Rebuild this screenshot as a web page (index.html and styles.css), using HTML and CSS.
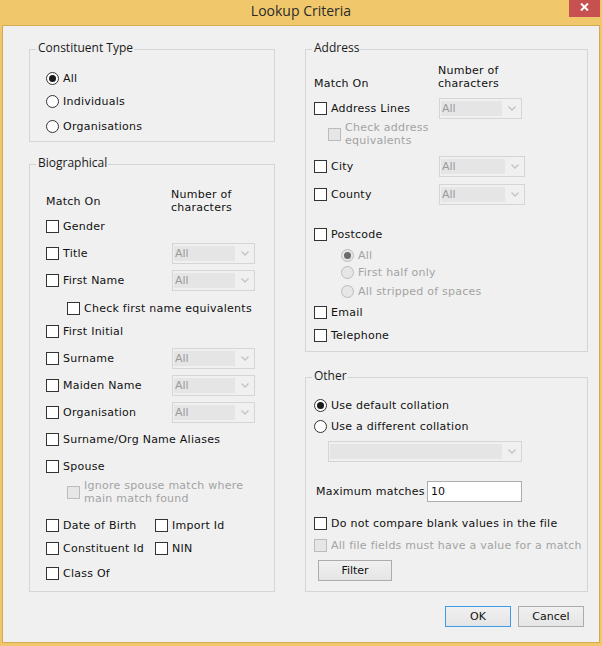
FILE: index.html
```html
<!DOCTYPE html>
<html lang="en">
<head>
<meta charset="utf-8">
<title>Lookup Criteria</title>
<link rel="stylesheet" href="styles.css">
</head>
<body>
<div class="window">
  <div class="titlebar">
    <span class="title">Lookup Criteria</span>
    <button class="close" aria-label="Close"><svg width="9" height="8" viewBox="0 0 9 8"><path d="M1 0.5 L8 7.5 M8 0.5 L1 7.5" stroke="#fff" stroke-width="2" fill="none"/></svg></button>
  </div>
  <div class="client">
    <div class="columns">
      <div class="col col-left">
        <fieldset class="group">
          <legend>Constituent Type</legend>
          <div class="gb gb-left gb-ct">
            <div class="row mt11"><span class="rb on"></span><span class="lbl">All</span></div>
            <div class="row mt3"><span class="rb"></span><span class="lbl">Individuals</span></div>
            <div class="row mt5"><span class="rb"></span><span class="lbl">Organisations</span></div>
          </div>
        </fieldset>
        <fieldset class="group bio">
          <legend>Biographical</legend>
          <div class="gb gb-left gb-bio">
            <div class="hdr hdr-bio"><span class="lead">Match On</span><span class="nchars">Number of<br>characters</span></div>
            <div class="row mt2"><span class="cb"></span><span class="lbl">Gender</span></div>
            <div class="row"><span class="lead"><span class="cb"></span><span class="lbl">Title</span></span><span class="combo w83"><span class="val">All</span><span class="arr"><svg width="8" height="5" viewBox="0 0 8 5"><path d="M0.5 0.5 L4 4 L7.5 0.5" fill="none" stroke="#c4c4c4" stroke-width="1.4"/></svg></span></span></div>
            <div class="row"><span class="lead"><span class="cb"></span><span class="lbl">First Name</span></span><span class="combo w83"><span class="val">All</span><span class="arr"><svg width="8" height="5" viewBox="0 0 8 5"><path d="M0.5 0.5 L4 4 L7.5 0.5" fill="none" stroke="#c4c4c4" stroke-width="1.4"/></svg></span></span></div>
            <div class="row mt8 ind21"><span class="cb"></span><span class="lbl">Check first name equivalents</span></div>
            <div class="row mt3"><span class="cb"></span><span class="lbl">First Initial</span></div>
            <div class="row"><span class="lead"><span class="cb"></span><span class="lbl">Surname</span></span><span class="combo w83"><span class="val">All</span><span class="arr"><svg width="8" height="5" viewBox="0 0 8 5"><path d="M0.5 0.5 L4 4 L7.5 0.5" fill="none" stroke="#c4c4c4" stroke-width="1.4"/></svg></span></span></div>
            <div class="row"><span class="lead"><span class="cb"></span><span class="lbl">Maiden Name</span></span><span class="combo w83"><span class="val">All</span><span class="arr"><svg width="8" height="5" viewBox="0 0 8 5"><path d="M0.5 0.5 L4 4 L7.5 0.5" fill="none" stroke="#c4c4c4" stroke-width="1.4"/></svg></span></span></div>
            <div class="row"><span class="lead"><span class="cb"></span><span class="lbl">Organisation</span></span><span class="combo w83"><span class="val">All</span><span class="arr"><svg width="8" height="5" viewBox="0 0 8 5"><path d="M0.5 0.5 L4 4 L7.5 0.5" fill="none" stroke="#c4c4c4" stroke-width="1.4"/></svg></span></span></div>
            <div class="row"><span class="cb"></span><span class="lbl">Surname/Org Name Aliases</span></div>
            <div class="row"><span class="cb"></span><span class="lbl">Spouse</span></div>
            <div class="row2 mt3 ind21 dis"><span class="cb dis"></span><span class="lbl">Ignore spouse match where<br>main match found</span></div>
            <div class="row mt10"><span class="half"><span class="cb"></span><span class="lbl">Date of Birth</span></span><span class="cb"></span><span class="lbl">Import Id</span></div>
            <div class="row mt3"><span class="half"><span class="cb"></span><span class="lbl">Constituent Id</span></span><span class="cb"></span><span class="lbl">NIN</span></div>
            <div class="row mt5"><span class="cb"></span><span class="lbl">Class Of</span></div>
          </div>
        </fieldset>
      </div>
      <div class="col col-right">
        <fieldset class="group">
          <legend>Address</legend>
          <div class="gb gb-right gb-addr">
            <div class="hdr hdr-addr"><span class="lead">Match On</span><span class="nchars">Number of<br>characters</span></div>
            <div class="row mt8"><span class="lead"><span class="cb"></span><span class="lbl">Address Lines</span></span><span class="combo w83"><span class="val">All</span><span class="arr"><svg width="8" height="5" viewBox="0 0 8 5"><path d="M0.5 0.5 L4 4 L7.5 0.5" fill="none" stroke="#c4c4c4" stroke-width="1.4"/></svg></span></span></div>
            <div class="row2 mt3 ind14 dis"><span class="cb dis"></span><span class="lbl">Check address<br>equivalents</span></div>
            <div class="row mt9"><span class="lead"><span class="cb"></span><span class="lbl">City</span></span><span class="combo w86"><span class="val">All</span><span class="arr"><svg width="8" height="5" viewBox="0 0 8 5"><path d="M0.5 0.5 L4 4 L7.5 0.5" fill="none" stroke="#c4c4c4" stroke-width="1.4"/></svg></span></span></div>
            <div class="row mt8"><span class="lead"><span class="cb"></span><span class="lbl">County</span></span><span class="combo w86"><span class="val">All</span><span class="arr"><svg width="8" height="5" viewBox="0 0 8 5"><path d="M0.5 0.5 L4 4 L7.5 0.5" fill="none" stroke="#c4c4c4" stroke-width="1.4"/></svg></span></span></div>
            <div class="row mt20"><span class="cb"></span><span class="lbl">Postcode</span></div>
            <div class="row sm mt3 ind27 dis"><span class="rb dis on"></span><span class="lbl">All</span></div>
            <div class="row sm mt1 ind27 dis"><span class="rb dis"></span><span class="lbl">First half only</span></div>
            <div class="row sm mt3 ind27 dis"><span class="rb dis"></span><span class="lbl">All stripped of spaces</span></div>
            <div class="row mt3"><span class="cb"></span><span class="lbl">Email</span></div>
            <div class="row mt3"><span class="cb"></span><span class="lbl">Telephone</span></div>
          </div>
        </fieldset>
        <fieldset class="group other">
          <legend>Other</legend>
          <div class="gb gb-right gb-other">
            <div class="row mt10"><span class="rb on"></span><span class="lbl">Use default collation</span></div>
            <div class="row mt1"><span class="rb"></span><span class="lbl">Use a different collation</span></div>
            <div class="row h21 mt5 ind14"><span class="combo w194"><span class="val"></span><span class="arr"><svg width="8" height="5" viewBox="0 0 8 5"><path d="M0.5 0.5 L4 4 L7.5 0.5" fill="none" stroke="#c4c4c4" stroke-width="1.4"/></svg></span></span></div>
            <div class="row h21 mt19 ind2"><span class="lbl maxlbl">Maximum matches</span><input class="tb" type="text" value="10" readonly></div>
            <div class="row mt11"><span class="cb"></span><span class="lbl">Do not compare blank values in the file</span></div>
            <div class="row mt2 dis"><span class="cb dis"></span><span class="lbl">All file fields must have a value for a match</span></div>
            <div class="row h21 mt5 ind4"><button class="btn filter">Filter</button></div>
          </div>
        </fieldset>
      </div>
    </div>
    <div class="actions">
      <button class="btn default">OK</button>
      <button class="btn">Cancel</button>
    </div>
  </div>
</div>
</body>
</html>
```
FILE: styles.css
```css
* { box-sizing: border-box; }
html, body { margin: 0; padding: 0; }
body {
  width: 602px;
  height: 646px;
  overflow: hidden;
  background: #f0c86b;
  font-family: "DejaVu Sans", Verdana, sans-serif;
  font-size: 11px;
  letter-spacing: 0.25px;
  color: #111;
}
.window {
  height: 646px;
  display: flex;
  flex-direction: column;
  background: #f0c86b;
}
.titlebar {
  height: 25px;
  display: grid;
  grid-template-columns: 1fr auto 1fr;
  align-items: start;
}
.title {
  grid-column: 2;
  font-family: "Open Sans", "Noto Sans", sans-serif;
  font-size: 14px;
  line-height: 21px;
  letter-spacing: 0;
  color: #2b2b2b;
}
.close {
  grid-column: 3;
  justify-self: end;
  margin-right: 2px;
  width: 31px;
  height: 17px;
  border: 0;
  padding: 0 0 3px;
  background: #c75050;
  display: flex;
  align-items: center;
  justify-content: center;
}
.client {
  flex: 1;
  margin: 0 2px 3px;
  border: 1px solid #d4aa52;
  background: #f0f0f0;
}
.columns {
  display: flex;
  gap: 30px;
  padding: 16px 11px 0 26px;
}
.col-left { width: 246px; }
.col-right { width: 283px; }

fieldset.group {
  margin: 0;
  padding: 0;
  min-width: 0;
  border: 1px solid #d5d5d5;
}
fieldset.bio { margin-top: 15px; }
fieldset.other { margin-top: 18px; }
legend {
  margin-left: 6px;
  padding: 0 1px 3px 2px;
  font-family: "Open Sans", "Noto Sans", sans-serif;
  font-size: 12px;
  line-height: 12px;
  letter-spacing: 0;
  color: #1a1a1a;
}
.gb-left { padding-left: 16px; }
.gb-right { padding-left: 8px; }
.gb-ct { padding-bottom: 5px; }
.gb-bio { padding-bottom: 8px; }
.gb-addr { padding-bottom: 6px; }
.gb-other { padding-bottom: 10px; }

.row {
  display: flex;
  align-items: center;
  height: 20px;
  margin-top: 7px;
  white-space: nowrap;
}
.row.sm { height: 16px; }
.row.h21 { height: 21px; }
.row2 {
  display: flex;
  align-items: center;
  height: 26px;
  line-height: 13px;
}
.mt1 { margin-top: 1px; }
.mt2 { margin-top: 2px; }
.mt3 { margin-top: 3px; }
.mt5 { margin-top: 5px; }
.mt8 { margin-top: 8px; }
.mt9 { margin-top: 9px; }
.mt10 { margin-top: 10px; }
.mt11 { margin-top: 11px; }
.mt19 { margin-top: 19px; }
.mt20 { margin-top: 20px; }
.ind2 { padding-left: 2px; }
.ind4 { padding-left: 4px; }
.ind14 { padding-left: 14px; }
.ind21 { padding-left: 21px; }
.ind27 { padding-left: 27px; }

.hdr {
  display: flex;
  height: 26px;
  line-height: 13px;
}
.hdr-bio { margin-top: 16px; align-items: center; }
.hdr-addr { margin-top: 7px; align-items: flex-end; }
.hdr .lead { width: 125px; }
.col-right .hdr .lead { width: 124px; }

.lead {
  display: flex;
  align-items: center;
  width: 126px;
}
.col-right .lead { width: 125px; }
.half {
  display: flex;
  align-items: center;
  width: 109px;
}
.lbl { margin-left: 4px; }
.dis .lbl { color: #a3a3a3; }
.maxlbl { margin-left: 0; width: 111px; }

.cb {
  flex: none;
  width: 13px;
  height: 13px;
  border: 1px solid #333;
  background: #fff;
}
.cb.dis {
  border-color: #bcbcbc;
  background: #e6e6e6;
}
.rb {
  flex: none;
  width: 13px;
  height: 13px;
  border: 1px solid #333;
  border-radius: 50%;
  background: #fff;
  display: flex;
  align-items: center;
  justify-content: center;
}
.rb.on::after {
  content: "";
  width: 7px;
  height: 7px;
  border-radius: 50%;
  background: #1a1a1a;
}
.rb.dis {
  border-color: #bcbcbc;
  background: #e6e6e6;
}
.rb.dis.on::after { background: #6b6b6b; }

.combo {
  flex: none;
  display: flex;
  align-items: center;
  height: 21px;
  border: 1px solid #d5d5d5;
  background: #f0f0f0;
  padding: 0 0 0 1px;
  letter-spacing: 0;
}
.w83 { width: 83px; }
.w86 { width: 86px; }
.w194 { width: 194px; }
.combo .val {
  flex: 1;
  height: 15px;
  line-height: 15px;
  padding-left: 1px;
  background: #e5e5e5;
  color: #9a9a9a;
}
.combo .arr {
  flex: none;
  width: 19px;
  display: flex;
  align-items: center;
  justify-content: center;
}

.tb {
  width: 95px;
  height: 21px;
  margin: 0;
  border: 1px solid #abadb3;
  background: #fff;
  padding: 0 0 0 3px;
  font-family: "DejaVu Sans", Verdana, sans-serif;
  font-size: 11px;
  color: #111;
  outline: none;
}

.btn {
  height: 21px;
  width: 66px;
  margin: 0;
  padding: 0;
  border: 1px solid #acacac;
  background: linear-gradient(#f0f0f0, #e5e5e5);
  font-family: "DejaVu Sans", Verdana, sans-serif;
  font-size: 11px;
  color: #111;
}
.btn.filter { width: 74px; }
.btn.default { border-color: #3d9be9; }
.actions {
  display: flex;
  justify-content: flex-end;
  gap: 7px;
  margin-top: 14px;
  padding-right: 15px;
}
```
